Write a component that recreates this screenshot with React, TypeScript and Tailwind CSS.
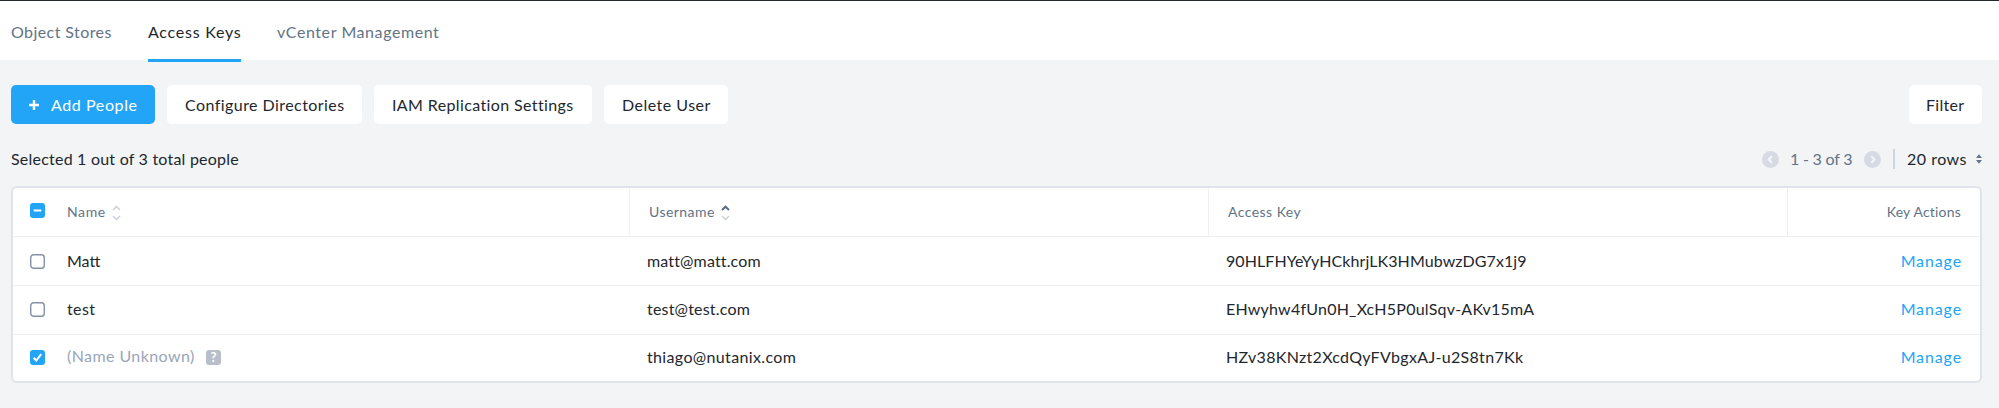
import type { ReactNode } from "react";

function PageArrow({ dir }: { dir: "left" | "right" }) {
  return (
    <svg className="h-[17px] w-[17px] shrink-0" viewBox="0 0 17 17" fill="none">
      <circle cx="8.5" cy="8.5" r="8.5" fill="#d6dae2" />
      <path
        d={dir === "left" ? "M9.9 5.2 6.7 8.5l3.2 3.3" : "M7.3 5.2l3.2 3.3-3.2 3.3"}
        stroke="#f6f7f9"
        strokeWidth="1.9"
      />
    </svg>
  );
}

function SortIcon({ active = false }: { active?: boolean }) {
  return (
    <svg className="mt-[17px] h-4 w-[9px] shrink-0" viewBox="0 0 9 16" fill="none" strokeWidth="1.6">
      <path d="M1 5 4.5 1.7 8 5" stroke={active ? "#5b6c85" : "#cdd2dc"} strokeWidth={active ? 2 : 1.6} />
      <path d="M1 11l3.5 3.3L8 11" stroke="#cdd2dc" />
    </svg>
  );
}

function Checkbox({ state }: { state: "off" | "on" | "some" }) {
  return (
    <svg className="block h-[15px] w-[15px]" viewBox="0 0 15 15" fill="none">
      {state === "off" ? (
        <rect x="0.75" y="0.75" width="13.5" height="13.5" rx="2.8" stroke="#8391a7" strokeWidth="1.4" fill="#fff" />
      ) : (
        <rect width="15" height="15" rx="3" fill="#22a5f7" />
      )}
      {state === "on" && <path d="M3.6 7.8 6.3 10.5 11.2 4.2" stroke="#fff" strokeWidth="2" />}
      {state === "some" && <path d="M3.7 7.5h7.6" stroke="#fff" strokeWidth="2" />}
    </svg>
  );
}

function Button({ className, children }: { className: string; children: ReactNode }) {
  return (
    <button className={`flex h-[39px] items-center rounded-[5px] pt-px whitespace-nowrap ${className}`}>
      {children}
    </button>
  );
}

const columns = "grid grid-cols-[617px_579px_579px_1fr]";

const rows = [
  { name: "Matt", nameClass: "tracking-[0px]", user: "matt@matt.com", userClass: "tracking-[0.15px]", accessKey: "90HLFHYeYyHCkhrjLK3HMubwzDG7x1j9", keyClass: "tracking-[0.09px]", rowClass: "h-[49px] pt-[14px] border-b" },
  { name: "test", nameClass: "tracking-[0.4px]", user: "test@test.com", userClass: "tracking-[0.2px]", accessKey: "EHwyhw4fUn0H_XcH5P0ulSqv-AKv15mA", keyClass: "tracking-[0.22px]", rowClass: "h-[49px] pt-[13px] border-b" },
  { name: null, nameClass: "", user: "thiago@nutanix.com", userClass: "tracking-[0.35px]", accessKey: "HZv38KNzt2XcdQyFVbgxAJ-u2S8tn7Kk", keyClass: "tracking-[0.31px]", rowClass: "h-[46px] pt-[12px]" },
];

export default function App() {
  return (
    <div className="flex h-[408px] w-[1999px] flex-col overflow-hidden bg-[#f2f4f6] font-['Lato',sans-serif] text-[16px] leading-5 text-[#22272e]">
      <nav className="flex h-[60px] shrink-0 border-t border-[#22272e] bg-white pl-[11px] text-[#627386]">
        <a className="mr-[36px] w-[101px] pt-[21px] tracking-[0.42px] whitespace-nowrap">Object Stores</a>
        <a className="mr-[36px] h-[61px] w-[93px] border-b-[3px] border-[#22a5f7] pt-[21px] tracking-[0.75px] whitespace-nowrap text-[#22272e]">
          Access Keys
        </a>
        <a className="pt-[21px] tracking-[0.58px] whitespace-nowrap">vCenter Management</a>
      </nav>

      <div className="mt-[25px] flex shrink-0 pr-[17px] pl-[11px]">
        <Button className="w-[144px] bg-[#22a5f7] pl-[18px] tracking-[0.6px] text-white">
          <svg className="mr-[12px] h-[10px] w-[10px]" viewBox="0 0 10 10" stroke="#fff" strokeWidth="2.4">
            <path d="M5 0v10M0 5h10" />
          </svg>
          Add People
        </Button>
        <Button className="ml-3 w-[195px] bg-white pl-[18px] tracking-[0.44px]">Configure Directories</Button>
        <Button className="ml-3 w-[218px] bg-white pl-[18px] tracking-[0.38px]">IAM Replication Settings</Button>
        <Button className="ml-3 w-[124px] bg-white pl-[18px] tracking-[0.48px]">Delete User</Button>
        <Button className="ml-auto w-[73px] bg-white pl-[17px] tracking-[0.28px]">Filter</Button>
      </div>

      <div className="mt-[25px] flex h-5 shrink-0 items-center pr-[17px] pl-[11px]">
        <span className="mr-auto tracking-[0.22px]">Selected 1 out of 3 total people</span>
        <PageArrow dir="left" />
        <span className="ml-[11px] w-[74px] tracking-[-0.2px] whitespace-nowrap text-[#627386]">1 - 3 of 3</span>
        <PageArrow dir="right" />
        <span className="ml-[12px] h-5 w-[2px] bg-[#d0d6de]" />
        <span className="ml-[12px] w-[69px] tracking-[0.5px]">20 rows</span>
        <svg className="h-[10px] w-[6px]" viewBox="0 0 6 10" fill="#627386">
          <path d="M0 4 3 0.3 6 4zM0 6h6L3 9.7z" />
        </svg>
      </div>

      <section className="mt-[17px] mr-[17px] ml-[11px] h-[197px] shrink-0 rounded-[6px] border-2 border-[#e0e4ea] bg-white">
        <div className={`${columns} h-[49px] border-b border-[#eef0f3] text-[14px] text-[#627386]`}>
          <div className="flex border-r border-[#eef0f3] pl-[17px]">
            <span className="pt-[15px]">
              <Checkbox state="some" />
            </span>
            <span className="ml-[22px] w-[45px] pt-[14px] tracking-[0.6px]">Name</span>
            <SortIcon />
          </div>
          <div className="flex border-r border-[#eef0f3] pl-[19px]">
            <span className="w-[72px] pt-[14px] tracking-[0.45px]">Username</span>
            <SortIcon active />
          </div>
          <div className="border-r border-[#eef0f3] pt-[14px] pl-[19px] tracking-[0.45px]">Access Key</div>
          <div className="pt-[14px] pr-[19px] text-right tracking-[0.2px]">Key Actions</div>
        </div>
        {rows.map((r) => (
          <div key={r.user} className={`${columns} border-[#eef0f3] ${r.rowClass}`}>
            <div className="flex items-start pl-[17px]">
              <span className="pt-[3px]">
                <Checkbox state={r.name ? "off" : "on"} />
              </span>
              {r.name ? (
                <span className={`ml-[22px] ${r.nameClass}`}>{r.name}</span>
              ) : (
                <>
                  <span className="-mt-px ml-[22px] w-[139px] tracking-[0.42px] whitespace-nowrap text-[#9aa5b8]">
                    (Name Unknown)
                  </span>
                  <span className="mt-[3px] flex h-[15px] w-[15px] items-center justify-center rounded-[3px] bg-[#b8bfca] text-[13px] leading-none font-bold text-white">
                    ?
                  </span>
                </>
              )}
            </div>
            <div className={`pl-[17px] ${r.userClass}`}>{r.user}</div>
            <div className={`pl-[17px] ${r.keyClass}`}>{r.accessKey}</div>
            <a className="pr-[18px] text-right tracking-[0.88px] text-[#22a5f7]">Manage</a>
          </div>
        ))}
      </section>
    </div>
  );
}
